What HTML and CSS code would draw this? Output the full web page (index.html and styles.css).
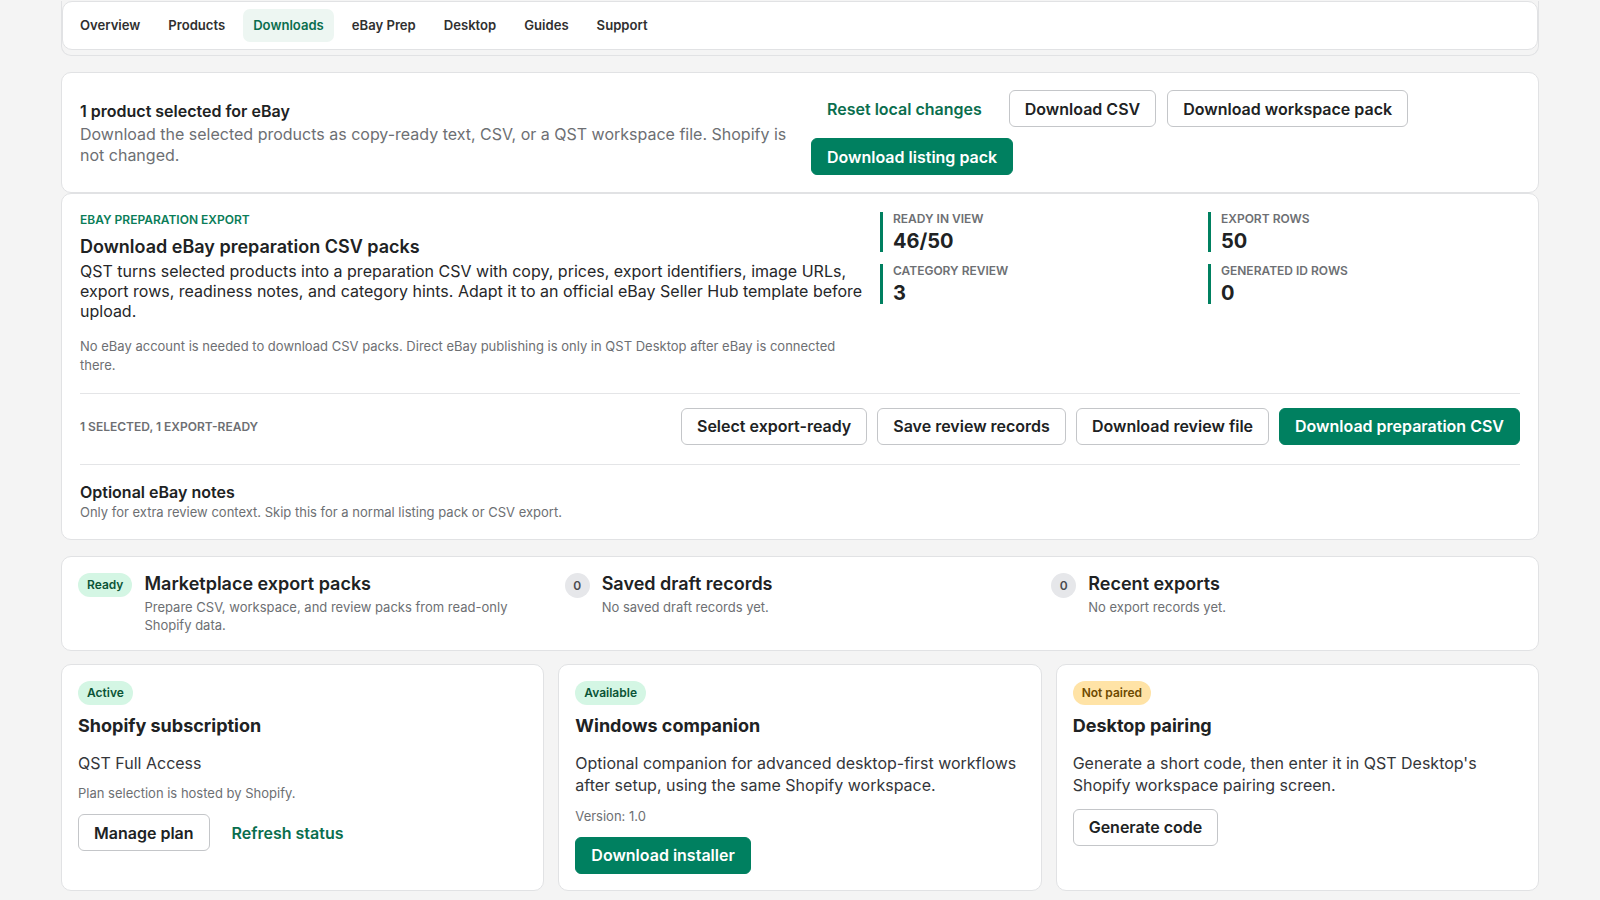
FILE: index.html
```html
<!DOCTYPE html>
<html lang="en">
<head>
<meta charset="utf-8">
<title>Downloads</title>
<link rel="stylesheet" href="styles.css">
</head>
<body>
<div class="page">
  <div class="nav-shell">
    <nav class="tabs">
      <span class="tab">Overview</span>
      <span class="tab">Products</span>
      <span class="tab active">Downloads</span>
      <span class="tab">eBay Prep</span>
      <span class="tab">Desktop</span>
      <span class="tab">Guides</span>
      <span class="tab">Support</span>
    </nav>
  </div>

  <div class="stack">
    <section class="card select-card">
      <div class="select-text">
        <h3 class="select-title">1 product selected for eBay</h3>
        <p class="select-desc">Download the selected products as copy-ready text, CSV, or a QST workspace file. Shopify is not changed.</p>
      </div>
      <div class="select-actions">
        <button class="btn link">Reset local changes</button>
        <button class="btn">Download CSV</button>
        <button class="btn">Download workspace pack</button>
        <button class="btn primary">Download listing pack</button>
      </div>
    </section>

    <section class="card prep-card">
      <div class="prep-top">
        <div class="prep-text">
          <div class="eyebrow">EBAY PREPARATION EXPORT</div>
          <h2 class="prep-title">Download eBay preparation CSV packs</h2>
          <p class="prep-desc">QST turns selected products into a preparation CSV with copy, prices, export identifiers, image URLs, export rows, readiness notes, and category hints. Adapt it to an official eBay Seller Hub template before upload.</p>
          <p class="note">No eBay account is needed to download CSV packs. Direct eBay publishing is only in QST Desktop after eBay is connected there.</p>
        </div>
        <div class="stats">
          <div class="stat"><div class="stat-label">READY IN VIEW</div><div class="stat-value">46/50</div></div>
          <div class="stat"><div class="stat-label">EXPORT ROWS</div><div class="stat-value">50</div></div>
          <div class="stat"><div class="stat-label">CATEGORY REVIEW</div><div class="stat-value">3</div></div>
          <div class="stat"><div class="stat-label">GENERATED ID ROWS</div><div class="stat-value">0</div></div>
        </div>
      </div>
      <div class="action-row">
        <div class="row-label">1 SELECTED, 1 EXPORT-READY</div>
        <div class="row-buttons">
          <button class="btn">Select export-ready</button>
          <button class="btn">Save review records</button>
          <button class="btn">Download review file</button>
          <button class="btn primary">Download preparation CSV</button>
        </div>
      </div>
      <div class="optional">
        <h3 class="opt-title">Optional eBay notes</h3>
        <p class="opt-desc">Only for extra review context. Skip this for a normal listing pack or CSV export.</p>
      </div>
    </section>
  </div>

  <section class="card status-card">
    <div class="status-item">
      <span class="badge green">Ready</span>
      <div>
        <h3 class="status-title">Marketplace export packs</h3>
        <p class="status-desc">Prepare CSV, workspace, and review packs from read-only Shopify data.</p>
      </div>
    </div>
    <div class="status-item">
      <span class="count">0</span>
      <div>
        <h3 class="status-title">Saved draft records</h3>
        <p class="status-desc">No saved draft records yet.</p>
      </div>
    </div>
    <div class="status-item">
      <span class="count">0</span>
      <div>
        <h3 class="status-title">Recent exports</h3>
        <p class="status-desc">No export records yet.</p>
      </div>
    </div>
  </section>

  <div class="tiles">
    <section class="card tile">
      <span class="badge green">Active</span>
      <h3 class="tile-title">Shopify subscription</h3>
      <p class="tile-body">QST Full Access</p>
      <p class="tile-small">Plan selection is hosted by Shopify.</p>
      <div class="tile-actions">
        <button class="btn">Manage plan</button>
        <button class="btn link">Refresh status</button>
      </div>
    </section>
    <section class="card tile">
      <span class="badge green">Available</span>
      <h3 class="tile-title">Windows companion</h3>
      <p class="tile-body">Optional companion for advanced desktop-first workflows after setup, using the same Shopify workspace.</p>
      <p class="tile-small">Version: 1.0</p>
      <div class="tile-actions">
        <button class="btn primary">Download installer</button>
      </div>
    </section>
    <section class="card tile">
      <span class="badge amber">Not paired</span>
      <h3 class="tile-title">Desktop pairing</h3>
      <p class="tile-body">Generate a short code, then enter it in QST Desktop's Shopify workspace pairing screen.</p>
      <div class="tile-actions">
        <button class="btn">Generate code</button>
      </div>
    </section>
  </div>
</div>
</body>
</html>
```

FILE: styles.css
```css
* { box-sizing: border-box; }

body {
  margin: 0;
  background: #f4f4f4;
  font-family: Inter, "Noto Sans", "Liberation Sans", sans-serif;
  color: #202223;
}

h2, h3, p { margin: 0; }

.page {
  padding: 1px 61px 40px;
  display: flex;
  flex-direction: column;
  gap: 16px;
}

/* nav */
.nav-shell {
  border: 1px solid #e1e2e4;
  border-top: 0;
  border-radius: 0 0 10px 10px;
  padding-bottom: 5px;
}

.tabs {
  background: #fff;
  border: 1px solid #e1e2e4;
  border-radius: 10px;
  display: flex;
  gap: 8px;
  padding: 7px 7px;
}

.tab {
  font-size: 13.1px;
  font-weight: 600;
  color: #303030;
  height: 33px;
  line-height: 33px;
  padding: 0 10px;
  border-radius: 7px;
}

.tab.active {
  background: #edf6f2;
  color: #0a6e4e;
}

/* cards */
.card {
  background: #fff;
  border: 1px solid #e1e2e4;
  border-radius: 10px;
}

.stack {
  display: flex;
  flex-direction: column;
}

/* buttons */
.btn {
  font-family: inherit;
  font-size: 16px;
  font-weight: 600;
  color: #202223;
  background: #fff;
  border: 1px solid #c4c6c9;
  border-radius: 6px;
  height: 37px;
  padding: 0 15px;
  white-space: nowrap;
  cursor: pointer;
}

.btn.primary {
  background: #008060;
  border-color: #008060;
  color: #fff;
}

.btn.link {
  border-color: transparent;
  background: transparent;
  color: #0a6e4e;
}

/* selection card */
.select-card {
  display: flex;
  align-items: center;
  gap: 20px;
  padding: 17px 18px;
}

.select-text {
  flex: 0 0 711px;
}

.select-title {
  font-size: 16px;
  font-weight: 600;
  line-height: 22px;
  margin-bottom: 2px;
}

.select-desc {
  font-size: 16px;
  line-height: 20.5px;
  color: #6d6f73;
}

.select-actions {
  flex: 1;
  display: flex;
  flex-wrap: wrap;
  gap: 11px;
}

/* prep card */
.prep-card {
  padding: 18px 18px 18px;
}

.prep-top {
  display: grid;
  grid-template-columns: minmax(0, 1fr) 640px;
  gap: 12px;
}

.eyebrow {
  font-size: 12px;
  font-weight: 600;
  line-height: 16px;
  color: #0a7d58;
}

.prep-title {
  margin-top: 7px;
  font-size: 18px;
  font-weight: 600;
  line-height: 24px;
}

.prep-desc {
  margin-top: 2px;
  font-size: 16px;
  line-height: 20px;
  color: #262729;
}

.note {
  margin-top: 16px;
  font-size: 13px;
  line-height: 19.4px;
  color: #6d6f73;
}

.stats {
  display: grid;
  grid-template-columns: 1fr 1fr;
  column-gap: 16px;
  row-gap: 12px;
  align-content: start;
}

.stat {
  border-left: 3px solid #008060;
  padding-left: 10px;
  height: 40px;
}

.stat-label {
  font-size: 12px;
  font-weight: 600;
  line-height: 14px;
  color: #6d6f73;
}

.stat-value {
  font-size: 20px;
  font-weight: 700;
  line-height: 30px;
  color: #202223;
}

.action-row {
  margin-top: 17px;
  border-top: 1px solid #e4e5e7;
  border-bottom: 1px solid #e4e5e7;
  padding: 14px 0 19px;
  display: flex;
  align-items: center;
  justify-content: space-between;
}

.row-label {
  font-size: 12px;
  font-weight: 600;
  color: #6d6f73;
}

.row-buttons {
  display: flex;
  gap: 10px;
}

.optional {
  padding-top: 16px;
}

.opt-title {
  font-size: 16px;
  font-weight: 600;
  line-height: 22px;
}

.opt-desc {
  font-size: 13px;
  line-height: 18px;
  color: #6d6f73;
}

/* status card */
.status-card {
  display: grid;
  grid-template-columns: repeat(3, 1fr);
  gap: 16px;
  padding: 15px 16px 16px;
}

.status-item {
  display: flex;
  align-items: flex-start;
  gap: 12px;
}

.status-title {
  font-size: 18px;
  font-weight: 600;
  line-height: 24px;
}

.status-desc {
  margin-top: 2px;
  font-size: 13px;
  line-height: 18px;
  color: #6d6f73;
  max-width: 395px;
}

.badge {
  display: inline-flex;
  align-items: center;
  height: 24px;
  padding: 0 9px;
  border-radius: 12px;
  font-size: 12px;
  font-weight: 600;
  flex: none;
}

.status-item .badge { margin-top: 1px; }

.badge.green {
  background: #d4f6e4;
  color: #0b5437;
}

.badge.amber {
  background: #ffe3a6;
  color: #6e4a00;
}

.count {
  flex: none;
  width: 25px;
  height: 25px;
  border-radius: 50%;
  background: #e6e7ea;
  color: #4a4c50;
  font-size: 12px;
  font-weight: 600;
  display: flex;
  align-items: center;
  justify-content: center;
  margin-top: 1px;
}

/* tiles */
.tiles {
  display: grid;
  grid-template-columns: repeat(3, 1fr);
  gap: 14px;
  margin-top: -3px;
}

.tile {
  padding: 16px;
  display: flex;
  flex-direction: column;
  align-items: flex-start;
}

.tile-title {
  margin-top: 9px;
  font-size: 18px;
  font-weight: 700;
  line-height: 24px;
}

.tile-body {
  margin-top: 14px;
  font-size: 16px;
  line-height: 22.5px;
  color: #34363a;
}

.tile-small {
  margin-top: 10px;
  font-size: 13px;
  line-height: 18px;
  color: #6d6f73;
}

.tile-actions {
  margin-top: 12px;
  display: flex;
  gap: 6px;
}
```
